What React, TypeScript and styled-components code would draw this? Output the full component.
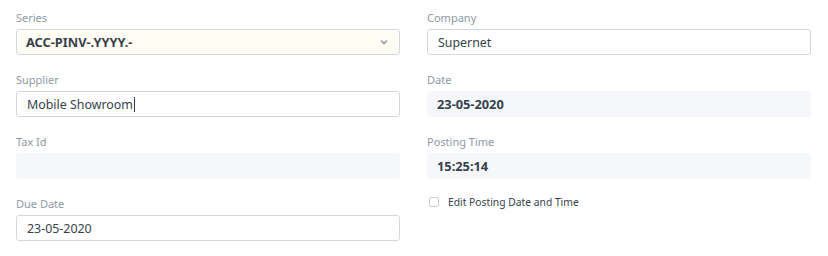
import * as React from 'react';
import styled, { createGlobalStyle } from 'styled-components';

const GlobalStyle = createGlobalStyle`
  body {
    margin: 0;
    background: #fff;
    font-family: "Noto Sans", "Open Sans", sans-serif;
    color: #36414c;
  }
`;

const Page = styled.div`
  display: grid;
  grid-template-columns: 384px 384px;
  column-gap: 27px;
  padding: 11px 17px 0 16px;
`;

const Column = styled.div`
  display: flex;
  flex-direction: column;
`;

const Group = styled.div`
  display: flex;
  flex-direction: column;
  margin-bottom: 18px;
`;

const Label = styled.div`
  font-size: 11px;
  line-height: 14px;
  color: #8d99a6;
  margin-bottom: 4px;
`;

type FieldProps = { $variant?: 'input' | 'select' | 'readonly' };

const Field = styled.div<FieldProps>`
  box-sizing: border-box;
  height: 26px;
  display: flex;
  align-items: center;
  justify-content: space-between;
  padding: 0 10px 0 ${(p) => (p.$variant === 'input' ? 10 : 9)}px;
  border-radius: 3px;
  font-size: ${(p) => (p.$variant === 'input' ? 12.4 : 12.8)}px;
  color: #36414c;
  border: 1px solid
    ${(p) => (p.$variant === 'readonly' ? '#f5f7fa' : '#d1d8dd')};
  background: ${(p) =>
    p.$variant === 'select'
      ? '#fffdf4'
      : p.$variant === 'readonly'
      ? '#f5f7fa'
      : '#fff'};
  font-weight: ${(p) => (p.$variant === 'input' ? 400 : 700)};
`;

const Caret = styled.span`
  display: inline-block;
  width: 1px;
  height: 15px;
  margin-left: 1px;
  background: #36414c;
  vertical-align: -3px;
`;

const Chevron = styled.svg`
  width: 10px;
  height: 10px;
`;

const CheckRow = styled.label`
  display: flex;
  align-items: center;
  gap: 9px;
  padding-left: 2px;
  margin-top: -2px;
  font-size: 10.3px;
  color: #36414c;
`;

const Box = styled.span`
  box-sizing: border-box;
  width: 10px;
  height: 10px;
  border: 1px solid #c8cfd6;
  border-radius: 2px;
  background: #fff;
`;

const App = () => (
  <>
    <GlobalStyle />
    <Page>
      <Column>
        <Group>
          <Label>Series</Label>
          <Field $variant="select">
            <span>ACC-PINV-.YYYY.-</span>
            <Chevron viewBox="0 0 10 10">
              <path d="M2 3.5 L5 6.5 L8 3.5" fill="none" stroke="#8d99a6" strokeWidth="1.6" />
            </Chevron>
          </Field>
        </Group>
        <Group>
          <Label>Supplier</Label>
          <Field $variant="input">
            <span>
              Mobile Showroom
              <Caret />
            </span>
          </Field>
        </Group>
        <Group>
          <Label>Tax Id</Label>
          <Field $variant="readonly" />
        </Group>
        <Group>
          <Label>Due Date</Label>
          <Field $variant="input">23-05-2020</Field>
        </Group>
      </Column>
      <Column>
        <Group>
          <Label>Company</Label>
          <Field $variant="input">Supernet</Field>
        </Group>
        <Group>
          <Label>Date</Label>
          <Field $variant="readonly">23-05-2020</Field>
        </Group>
        <Group>
          <Label>Posting Time</Label>
          <Field $variant="readonly">15:25:14</Field>
        </Group>
        <CheckRow>
          <Box />
          Edit Posting Date and Time
        </CheckRow>
      </Column>
    </Page>
  </>
);

export default App;
